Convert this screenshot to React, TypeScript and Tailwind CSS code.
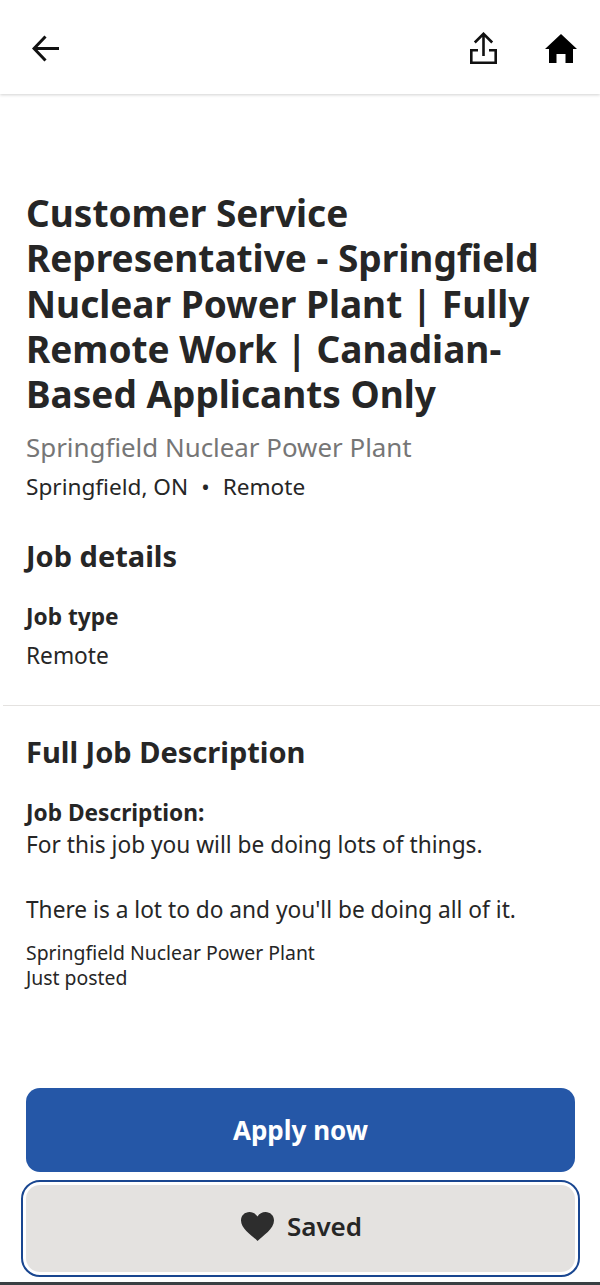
const sans = "font-['Noto_Sans',sans-serif]";

function BackIcon() {
  return (
    <svg width="27" height="27" viewBox="0 0 27 27" fill="none" stroke="#111" strokeWidth="3">
      <path d="M27 13.500H3M13.500 1.500 2 13.500l11.500 12" />
    </svg>
  );
}

function ShareIcon() {
  return (
    <svg width="27" height="32" viewBox="0 0 27 32" fill="none" stroke="#111" strokeWidth="2.600">
      <path d="M13.500 24V2M4.800 10.500 13.500 1.800l8.700 8.700" />
      <path d="M8 18.300H1.300v12.400h24.400V18.300H19" />
    </svg>
  );
}

function HomeIcon() {
  return (
    <svg width="32" height="29" viewBox="0 0 32 29" fill="#000">
      <path d="M16 0 32 15h-4v14h-7.500V20h-9v9H4V15H0z" />
    </svg>
  );
}

function HeartIcon() {
  return (
    <svg width="33" height="29" viewBox="0 0 33 29" fill="#2d2d2d">
      <path d="M16.500 29C11 23.500 0 17 0 8.500 0 3.500 3.800 0 8.500 0c3.300 0 6.300 1.700 8 4.500 1.700-2.800 4.700-4.500 8-4.500C29.200 0 33 3.500 33 8.500 33 17 22 23.500 16.500 29z" />
    </svg>
  );
}

export default function App() {
  return (
    <div className={`${sans} relative flex h-[1285px] w-[600px] flex-col overflow-hidden bg-white text-[#262626]`}>
      <header className="flex h-[94px] shrink-0 items-center justify-between pl-[32px] pr-[23px] pt-[2px] shadow-[0_1px_3px_rgba(0,0,0,0.18)]">
        <BackIcon />
        <div className="flex items-center gap-[48px]">
          <ShareIcon />
          <HomeIcon />
        </div>
      </header>

      <main className="flex-1 pt-[96px]">
        <section className="px-[26px]">
          <h1 className="text-[37px] font-bold leading-[45.300px]">
            Customer Service Representative - Springfield Nuclear Power Plant | Fully Remote Work | Canadian-Based Applicants Only
          </h1>
          <p className="mt-[13px] text-[25.900px] leading-[36px] text-[#767676]">Springfield Nuclear Power Plant</p>
          <p className="mt-[5px] text-[22.600px] leading-[33px]">
            Springfield, ON<span className="mx-[13px]">•</span>Remote
          </p>
          <h2 className="mt-[35px] text-[29px] font-bold leading-[36px]">Job details</h2>
          <h3 className="mt-[27px] text-[22.700px] font-bold leading-[32px]">Job type</h3>
          <p className="mt-[7px] text-[22.700px] leading-[32px]">Remote</p>
        </section>

        <hr className="ml-[3px] mt-[33px] border-[#e4e2e0]" />

        <section className="px-[26px]">
          <h2 className="mt-[28px] text-[29px] font-bold leading-[36px]">Full Job Description</h2>
          <h3 className="mt-[27px] text-[22.700px] font-bold leading-[32px]">Job Description:</h3>
          <p className="text-[22.700px] leading-[32.500px]">
            For this job you will be doing lots of things.
            <br />
            <br />
            There is a lot to do and you'll be doing all of it.
          </p>
          <p className="mt-[13px] text-[19.400px] leading-[25.500px]">
            Springfield Nuclear Power Plant
            <br />
            Just posted
          </p>
        </section>
      </main>

      <footer className="flex shrink-0 flex-col gap-[13px] pb-[10px] pl-[26px] pr-[25px]">
        <button className="h-[84px] rounded-[14px] bg-[#2557a7] text-[26px] font-bold text-white">Apply now</button>
        <button className="flex h-[87px] items-center justify-center gap-[13px] rounded-[14px] bg-[#e4e2e0] pb-[4px] pl-[2px] text-[26px] font-semibold outline-[2px] outline-offset-[3px] outline-[#194690]">
          <HeartIcon />
          Saved
        </button>
      </footer>
      <div className="h-[3px] shrink-0 bg-[#3a3f43]" />
    </div>
  );
}
